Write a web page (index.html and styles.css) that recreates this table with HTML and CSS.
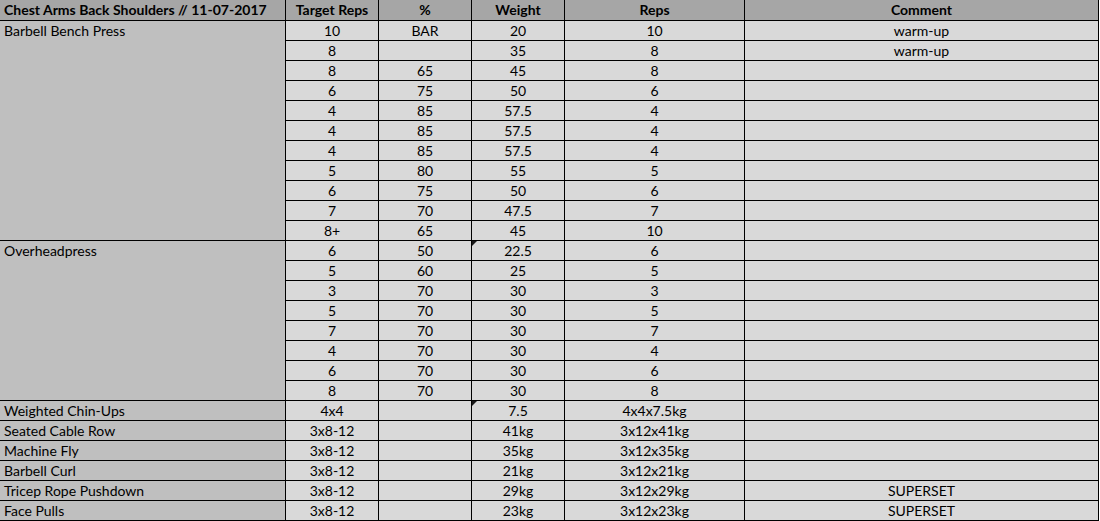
FILE: index.html
```html
<!DOCTYPE html>
<html lang="en">
<head>
<meta charset="utf-8">
<title>Chest Arms Back Shoulders // 11-07-2017</title>
<link rel="stylesheet" href="styles.css">
</head>
<body>
<div class="sheet">
  <div class="h first">Chest Arms Back Shoulders // 11-07-2017</div>
  <div class="h">Target Reps</div>
  <div class="h">%</div>
  <div class="h">Weight</div>
  <div class="h">Reps</div>
  <div class="h">Comment</div>

  <div class="ex span-11">Barbell Bench Press</div>
  <div class="c">10</div><div class="c">BAR</div><div class="c">20</div><div class="c">10</div><div class="c">warm-up</div>
  <div class="c">8</div><div class="c"></div><div class="c">35</div><div class="c">8</div><div class="c">warm-up</div>
  <div class="c">8</div><div class="c">65</div><div class="c">45</div><div class="c">8</div><div class="c"></div>
  <div class="c">6</div><div class="c">75</div><div class="c">50</div><div class="c">6</div><div class="c"></div>
  <div class="c">4</div><div class="c">85</div><div class="c">57.5</div><div class="c">4</div><div class="c"></div>
  <div class="c">4</div><div class="c">85</div><div class="c">57.5</div><div class="c">4</div><div class="c"></div>
  <div class="c">4</div><div class="c">85</div><div class="c">57.5</div><div class="c">4</div><div class="c"></div>
  <div class="c">5</div><div class="c">80</div><div class="c">55</div><div class="c">5</div><div class="c"></div>
  <div class="c">6</div><div class="c">75</div><div class="c">50</div><div class="c">6</div><div class="c"></div>
  <div class="c">7</div><div class="c">70</div><div class="c">47.5</div><div class="c">7</div><div class="c"></div>
  <div class="c">8+</div><div class="c">65</div><div class="c">45</div><div class="c">10</div><div class="c"></div>

  <div class="ex span-8">Overheadpress</div>
  <div class="c">6</div><div class="c">50</div><div class="c flag">22.5</div><div class="c">6</div><div class="c"></div>
  <div class="c">5</div><div class="c">60</div><div class="c">25</div><div class="c">5</div><div class="c"></div>
  <div class="c">3</div><div class="c">70</div><div class="c">30</div><div class="c">3</div><div class="c"></div>
  <div class="c">5</div><div class="c">70</div><div class="c">30</div><div class="c">5</div><div class="c"></div>
  <div class="c">7</div><div class="c">70</div><div class="c">30</div><div class="c">7</div><div class="c"></div>
  <div class="c">4</div><div class="c">70</div><div class="c">30</div><div class="c">4</div><div class="c"></div>
  <div class="c">6</div><div class="c">70</div><div class="c">30</div><div class="c">6</div><div class="c"></div>
  <div class="c">8</div><div class="c">70</div><div class="c">30</div><div class="c">8</div><div class="c"></div>

  <div class="ex">Weighted Chin-Ups</div>
  <div class="c">4x4</div><div class="c"></div><div class="c flag">7.5</div><div class="c">4x4x7.5kg</div><div class="c"></div>
  <div class="ex">Seated Cable Row</div>
  <div class="c">3x8-12</div><div class="c"></div><div class="c">41kg</div><div class="c">3x12x41kg</div><div class="c"></div>
  <div class="ex">Machine Fly</div>
  <div class="c">3x8-12</div><div class="c"></div><div class="c">35kg</div><div class="c">3x12x35kg</div><div class="c"></div>
  <div class="ex">Barbell Curl</div>
  <div class="c">3x8-12</div><div class="c"></div><div class="c">21kg</div><div class="c">3x12x21kg</div><div class="c"></div>
  <div class="ex">Tricep Rope Pushdown</div>
  <div class="c">3x8-12</div><div class="c"></div><div class="c">29kg</div><div class="c">3x12x29kg</div><div class="c">SUPERSET</div>
  <div class="ex">Face Pulls</div>
  <div class="c">3x8-12</div><div class="c"></div><div class="c">23kg</div><div class="c">3x12x23kg</div><div class="c">SUPERSET</div>
</div>
</body>
</html>
```

FILE: styles.css
```css
html, body {
  margin: 0;
  padding: 0;
  background: #ffffff;
}

.sheet {
  display: grid;
  grid-template-columns: 285px 92px 92px 92px 179px 353px;
  grid-template-rows: 20px;
  grid-auto-rows: 19px;
  gap: 1px;
  width: 1098px;
  padding: 0 1px 1px 0;
  background: #000000;
  font-family: "Lato", "Liberation Sans", sans-serif;
  font-size: 14px;
  color: #000000;
}

.h {
  background: #a6a6a6;
  font-weight: bold;
  text-align: center;
  line-height: 20px;
  white-space: nowrap;
}

.h.first {
  text-align: left;
  padding-left: 4px;
}

.ex {
  background: #bfbfbf;
  padding-left: 4px;
  line-height: 20px;
  white-space: nowrap;
}

.span-11 {
  grid-row: span 11;
}

.span-8 {
  grid-row: span 8;
}

.c {
  position: relative;
  background: #d9d9d9;
  text-align: center;
  line-height: 20px;
  white-space: nowrap;
}

.flag::before {
  content: "";
  position: absolute;
  left: 0;
  top: 0;
  width: 0;
  height: 0;
  border-top: 5px solid #1a1a1a;
  border-right: 5px solid transparent;
}
```
